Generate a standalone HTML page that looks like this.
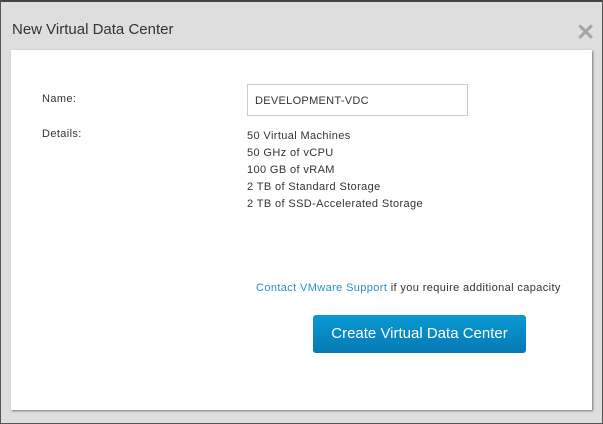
<!DOCTYPE html>
<html><head><style>
body{margin:0;width:603px;height:423px;overflow:hidden;font-family:"Liberation Sans",sans-serif;}
.outer{position:absolute;left:0;top:0;width:601px;height:421px;background:#dedede;border:1px solid #555;border-top:2px solid #444;}
.title{position:absolute;left:11px;top:19px;font-size:15px;color:#333;}
.x{position:absolute;left:575px;top:17px;font-size:23px;color:#a5a5a5;font-weight:bold;}
.panel{position:absolute;left:11px;top:50px;width:581px;height:360px;background:#fff;box-shadow:1px 1px 2px #777;}
.t{position:absolute;font-size:11px;color:#333;letter-spacing:0.38px;}
.inp{position:absolute;left:236px;top:34px;width:221px;height:32px;border:1px solid #ccc;box-sizing:border-box;font-size:11px;color:#333;padding:10px 0 0 7px;letter-spacing:0.3px;}
.btn{position:absolute;left:302px;top:265px;width:213px;height:38px;border-radius:3px;background:linear-gradient(#0a9ad3,#0679b3);color:#fff;font-size:15px;text-align:center;line-height:38px;}
</style></head><body>
<div class="outer">
<div class="title">New Virtual Data Center</div>
<div class="x">✕</div>
</div>
<div class="panel">
<div class="t" style="left:31px;top:43px">Name:</div>
<div class="inp">DEVELOPMENT-VDC</div>
<div class="t" style="left:31px;top:78px">Details:</div>
<div class="t" style="left:236px;top:78px;line-height:17px">50 Virtual Machines<br>50 GHz of vCPU<br>100 GB of vRAM<br>2 TB of Standard Storage<br>2 TB of SSD-Accelerated Storage</div>
<div class="t" style="left:245px;top:232px"><span style="color:#2a8fc9">Contact VMware Support</span> if you require additional capacity</div>
<div class="btn">Create Virtual Data Center</div>
</div>
</body></html>
